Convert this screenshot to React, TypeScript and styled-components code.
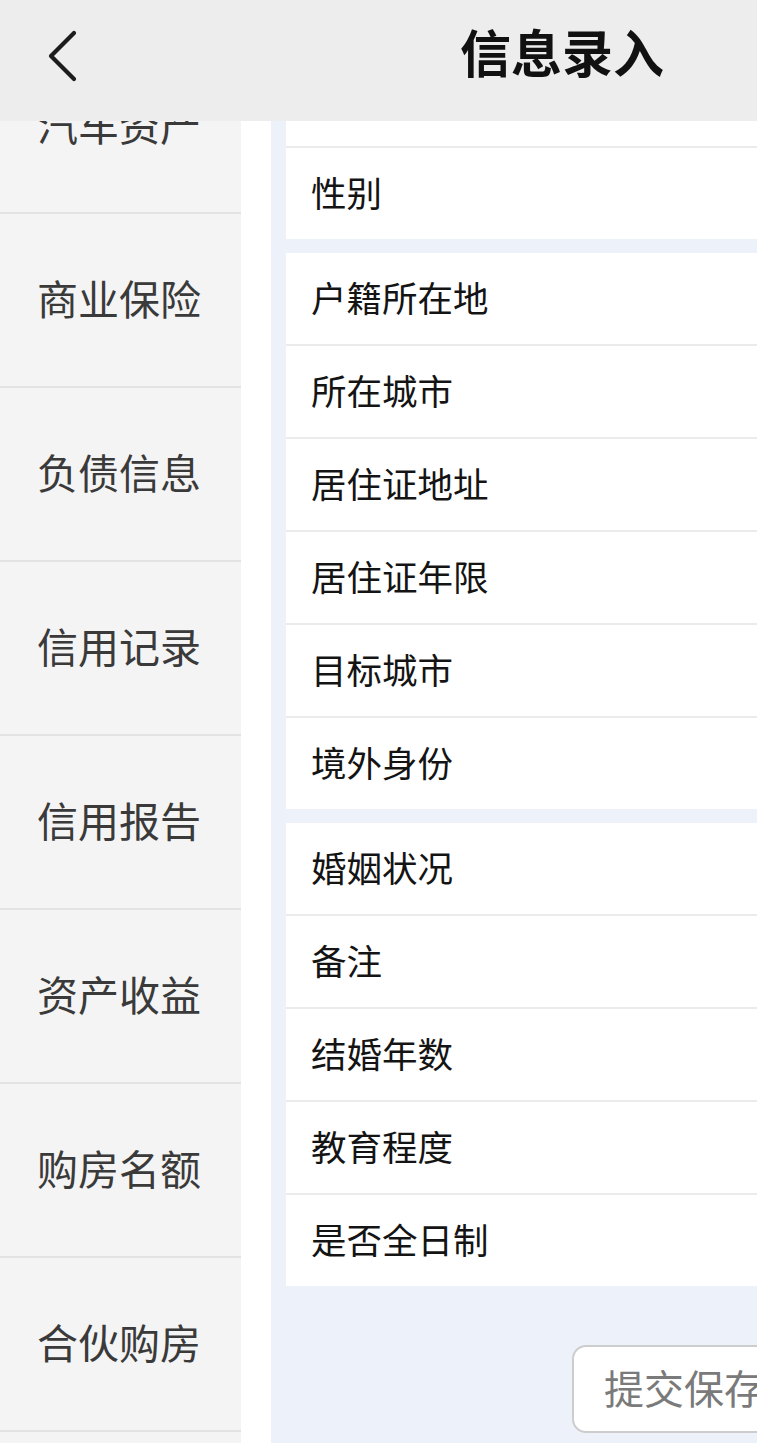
import React from 'react'
import styled, { createGlobalStyle } from 'styled-components'

const GlobalStyle = createGlobalStyle`
  html, body {
    margin: 0;
    padding: 0;
    background: #ffffff;
  }
  body {
    font-family: "Noto Sans CJK SC", "Noto Sans", sans-serif;
  }
`

const menuItems = ['汽车资产', '商业保险', '负债信息', '信用记录', '信用报告', '资产收益', '购房名额', '合伙购房']

// the form is scrolled, so the first row of the first group sits under the header
const fieldGroups = [
  ['出生日期', '性别'],
  ['户籍所在地', '所在城市', '居住证地址', '居住证年限', '目标城市', '境外身份'],
  ['婚姻状况', '备注', '结婚年数', '教育程度', '是否全日制'],
]

const BackIcon = () => (
  <svg width="34" height="54" viewBox="0 0 34 54" fill="none">
    <path d="M28 4 L5 27 L28 50" stroke="#1c1c1c" strokeWidth="4.2" strokeLinecap="round" strokeLinejoin="round" />
  </svg>
)

export default function App() {
  return (
    <>
      <GlobalStyle />
      <Page>
        <Header>
          <BackButton>
            <BackIcon />
          </BackButton>
          <Title>信息录入</Title>
        </Header>
        <Body>
          <Sidebar>
            <MenuList>
              {menuItems.map((item) => (
                <MenuItem key={item}>{item}</MenuItem>
              ))}
            </MenuList>
          </Sidebar>
          <Panel>
            <PanelInner>
              {fieldGroups.map((group, i) => (
                <Card key={i}>
                  {group.map((field) => (
                    <Row key={field}>{field}</Row>
                  ))}
                </Card>
              ))}
              <SubmitButton>提交保存</SubmitButton>
            </PanelInner>
          </Panel>
        </Body>
      </Page>
    </>
  )
}

const Page = styled.div`
  width: 757px;
  height: 1443px;
  display: flex;
  flex-direction: column;
  overflow: hidden;
  background: #ffffff;
`

const Header = styled.header`
  height: 121px;
  flex-shrink: 0;
  display: flex;
  align-items: center;
  background: #ededed;
`

const BackButton = styled.div`
  width: 34px;
  height: 54px;
  margin: -9px 0 0 46px;
  display: flex;
`

const Title = styled.h1`
  margin: -18px 0 0 380px;
  font-size: 51px;
  line-height: 1.2;
  font-weight: 700;
  color: #111111;
  white-space: nowrap;
`

const Body = styled.div`
  flex: 1;
  display: flex;
  overflow: hidden;
  background: #ffffff;
`

const Sidebar = styled.nav`
  width: 241px;
  flex-shrink: 0;
  margin-right: 30px;
  background: #f4f4f4;
  overflow: hidden;
`

const MenuList = styled.div`
  margin-top: -81px;
  display: flex;
  flex-direction: column;
`

const MenuItem = styled.div`
  height: 174px;
  box-sizing: border-box;
  flex-shrink: 0;
  display: flex;
  align-items: center;
  padding: 0 0 6px 37px;
  border-bottom: 2px solid #e3e3e3;
  font-size: 41px;
  color: #3a3a3a;
  white-space: nowrap;
`

const Panel = styled.main`
  flex: 1;
  min-width: 0;
  background: #edf1fa;
  overflow: hidden;
`

const PanelInner = styled.div`
  margin-top: -66px;
  padding-left: 15px;
  display: flex;
  flex-direction: column;
  gap: 14px;
`

const Card = styled.section`
  background: #ffffff;
  display: flex;
  flex-direction: column;
`

const Row = styled.div`
  height: 91px;
  box-sizing: border-box;
  display: flex;
  align-items: center;
  padding: 0 0 5px 25px;
  font-size: 35.5px;
  color: #141414;
  white-space: nowrap;

  & + & {
    height: 93px;
    border-top: 2px solid #ebebeb;
  }
`

const SubmitButton = styled.button`
  align-self: flex-start;
  flex-shrink: 0;
  width: 260px;
  height: 88px;
  margin: 45px 0 0 286px;
  padding: 0 0 4px 30px;
  text-align: left;
  background: #ffffff;
  border: 2px solid #cdcdcd;
  border-radius: 14px;
  font-family: "Noto Sans CJK SC", "Noto Sans", sans-serif;
  font-size: 40px;
  color: #7a7a7a;
  white-space: nowrap;
`
